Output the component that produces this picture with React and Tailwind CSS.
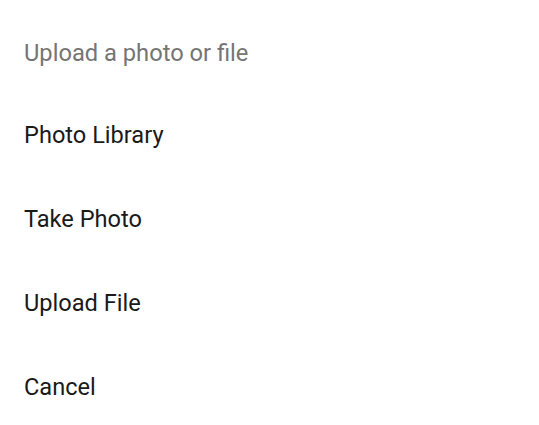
import React from "react";

const options = ["Photo Library", "Take Photo", "Upload File", "Cancel"];

const App = () => {
    return (
        <div className="w-[539px] h-[425px] bg-white font-['Roboto',sans-serif] overflow-hidden">
            <div className="pt-[37px] px-6">
                <h2 className="text-[23.7px] leading-[32px] text-[#757575] font-normal">Upload a photo or file</h2>
                <div className="mt-[25px]">
                    {options.map(option => (
                        <div key={option} className="h-[84px] flex items-center text-[23.6px] text-[#1a1a1a]">
                            {option}
                        </div>
                    ))}
                </div>
            </div>
        </div>
    );
};

export default App;
